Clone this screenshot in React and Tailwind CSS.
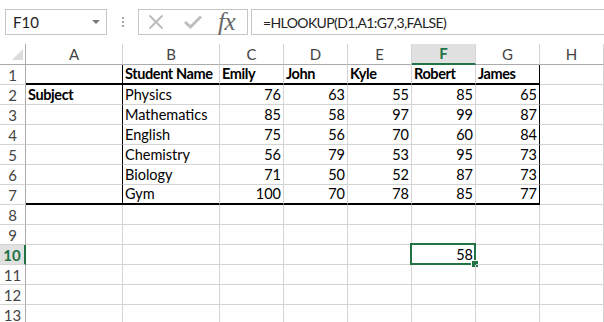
import React from "react";

const COLS = ["A", "B", "C", "D", "E", "F", "G", "H"];

const DATA = {
  1: [
    { t: "" },
    { t: "Student Name", b: true },
    { t: "Emily", b: true },
    { t: "John", b: true },
    { t: "Kyle", b: true },
    { t: "Robert", b: true },
    { t: "James", b: true },
  ],
  2: [{ t: "Subject", b: true }, { t: "Physics" }, 76, 63, 55, 85, 65],
  3: [{ t: "" }, { t: "Mathematics" }, 85, 58, 97, 99, 87],
  4: [{ t: "" }, { t: "English" }, 75, 56, 70, 60, 84],
  5: [{ t: "" }, { t: "Chemistry" }, 56, 79, 53, 95, 73],
  6: [{ t: "" }, { t: "Biology" }, 71, 50, 52, 87, 73],
  7: [{ t: "" }, { t: "Gym" }, 100, 70, 78, 85, 77],
};

function Cell({ row, col }) {
  const data = DATA[row];
  const v = data ? data[col] : undefined;
  const inTableRow = row >= 1 && row <= 7;
  const thickBottom = (row === 1 || row === 7) && col <= 6;
  const blackRight = inTableRow && (col === 0 || col === 6);
  const isNum = typeof v === "number";
  const isSel = row === 10 && col === 5;

  let cls =
    "relative h-[20px] flex items-center px-[2px] text-[14.5px] leading-none text-black whitespace-nowrap ";
  cls += thickBottom ? "border-b-2 border-b-black " : "border-b border-b-[#d4d4d4] ";
  cls += blackRight ? "border-r border-r-black " : "border-r border-r-[#d4d4d4] ";
  if (isNum || isSel) cls += "justify-end ";
  if (v && v.b) cls += "font-bold tracking-[-0.4px] ";

  return (
    <div className={cls}>
      <span className="pt-[1px]">{isSel ? 58 : isNum ? v : v ? v.t : ""}</span>
      {isSel && (
        <>
          <div className="absolute top-[-2px] left-[-2px] right-[-1px] bottom-[-1px] border-2 border-[#217346] pointer-events-none" />
          <div className="absolute right-[-3px] bottom-[-3px] w-[6px] h-[6px] bg-[#217346] border border-white box-content -mr-[1px] -mb-[1px]" />
        </>
      )}
    </div>
  );
}

export default function App() {
  const rows = Array.from({ length: 13 }, (_, i) => i + 1);
  return (
    <div className="w-[604px] h-[322px] bg-white overflow-hidden font-['Lato','Liberation_Sans',sans-serif]">
      {/* Formula bar */}
      <div className="h-[44px] flex items-start pt-[9px] pl-[5px]">
        <div className="w-[102px] h-[26px] border border-[#c6c6c6] flex items-center justify-between pl-[7px] pr-[6px]">
          <span className="text-[15px] text-[#222] leading-none pt-[1px]">F10</span>
          <svg width="8" height="5" viewBox="0 0 8 5">
            <path d="M0 0 L8 0 L4 4 Z" fill="#7a7a7a" />
          </svg>
        </div>
        <div className="w-[31px] h-[26px] flex flex-col items-center justify-center gap-[2px]">
          <div className="w-[2px] h-[2px] bg-[#a6a6a6]" />
          <div className="w-[2px] h-[2px] bg-[#a6a6a6]" />
          <div className="w-[2px] h-[2px] bg-[#a6a6a6]" />
        </div>
        <div className="w-[110px] h-[26px] border border-[#c6c6c6] flex items-center pl-[9px]">
          <svg width="16" height="16" viewBox="0 0 16 16">
            <path d="M1.5 1.5 L14.5 14.5 M14.5 1.5 L1.5 14.5" stroke="#bdbdbd" strokeWidth="2" />
          </svg>
          <svg className="ml-[20px]" width="18" height="14" viewBox="0 0 18 14">
            <path d="M1 7 L6.5 12 L17 1.5" stroke="#bdbdbd" strokeWidth="2.8" fill="none" />
          </svg>
          <span className="ml-[16px] font-['Liberation_Serif',serif] italic text-[25px] leading-none text-[#666] tracking-[-0.5px] pb-[2px]">
            fx
          </span>
        </div>
        <div className="ml-[3px] flex-1 -mr-[4px] h-[26px] border border-[#c6c6c6] flex items-center pl-[11px]">
          <span className="text-[14px] tracking-[-0.6px] text-[#222] leading-none pt-[1px] whitespace-nowrap">
            =HLOOKUP(D1,A1:G7,3,FALSE)
          </span>
        </div>
      </div>

      {/* Grid */}
      <div className="grid grid-cols-[26px_97px_97px_64px_64px_64px_64px_64px_1fr]">
        {/* Header row */}
        <div className="relative h-[21px] border-r border-r-[#ababab] border-b border-b-[#ababab]">
          <svg className="absolute left-[12px] top-[5px]" width="11" height="11" viewBox="0 0 11 11">
            <path d="M11 0 L11 11 L0 11 Z" fill="#dcdcdc" />
          </svg>
        </div>
        {COLS.map((c) =>
          c === "F" ? (
            <div
              key={c}
              className="h-[21px] flex items-center justify-center bg-[#e1e1e1] border-r border-r-[#d4d4d4] border-b-2 border-b-[#217346] text-[15px] font-bold text-[#217346] leading-none"
            >
              <span>{c}</span>
            </div>
          ) : (
            <div
              key={c}
              className="h-[21px] flex items-center justify-center border-r border-r-[#d4d4d4] border-b border-b-[#ababab] text-[15px] text-[#444] leading-none"
            >
              <span>{c}</span>
            </div>
          )
        )}

        {rows.map((r) => (
          <React.Fragment key={r}>
            {r === 10 ? (
              <div className="h-[20px] flex items-center justify-center bg-[#e1e1e1] border-r-2 border-r-[#217346] border-b border-b-[#d4d4d4] text-[15px] font-bold text-[#217346] leading-none">
                <span className="pt-[1px]">{r}</span>
              </div>
            ) : (
              <div className="h-[20px] flex items-center justify-center border-r border-r-[#ababab] border-b border-b-[#d4d4d4] text-[15px] text-[#444] leading-none">
                <span className="pt-[1px]">{r}</span>
              </div>
            )}
            {COLS.map((c, ci) => (
              <Cell key={c} row={r} col={ci} />
            ))}
          </React.Fragment>
        ))}
      </div>
    </div>
  );
}
